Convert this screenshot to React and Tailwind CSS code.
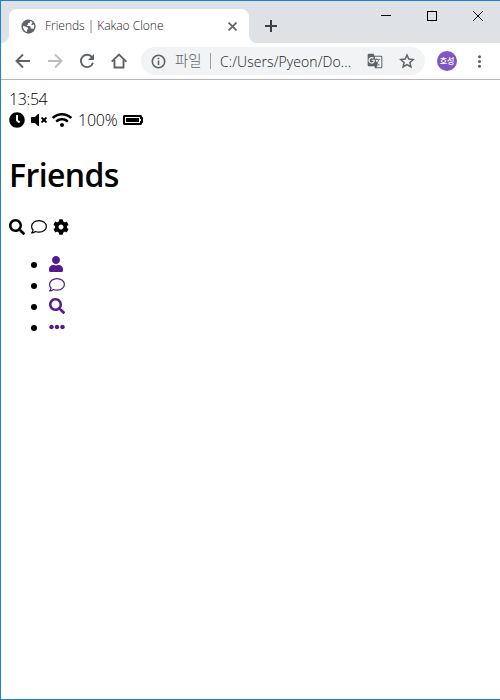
import React from "react";
import {
  FaClock,
  FaVolumeMute,
  FaWifi,
  FaBatteryFull,
  FaSearch,
  FaCog,
  FaUser,
  FaEllipsisH,
} from "react-icons/fa";
import { MdGTranslate, MdMoreVert } from "react-icons/md";

function Line({ children, className, width = 1.9 }) {
  return (
    <svg viewBox="0 0 16 16" className={className} fill="none" stroke="currentColor" strokeWidth={width}>
      {children}
    </svg>
  );
}

function Globe() {
  return (
    <svg viewBox="0 0 16 16" className="size-[15px] shrink-0">
      <circle cx="8" cy="8" r="7.6" fill="#5f6368" />
      <path
        d="M9.6 2.1C10 3.300 9.500 4 8.500 4.200L7.400 4.600V6L6.300 6.400V7.500H9.400L10.400 8.500V10H12.300L13.300 11C14.200 9.600 14.400 7.400 13.700 5.700L12 6.600L10.800 5.800L12.400 3.600C11.600 2.800 10.700 2.300 9.600 2.100z"
        fill="#ffffff"
      />
      <path
        d="M2.100 7.200L5.300 8.200L7.500 9.200V10.600L6.400 11.700V13.800C3.900 13.200 1.900 10.700 2.100 7.200z"
        fill="#ffffff"
      />
    </svg>
  );
}

function Comment() {
  return (
    <svg viewBox="0 0 16 16" className="size-4" fill="none" stroke="currentColor" strokeWidth="1.2" strokeLinejoin="round">
      <path d="M8 1.600c4.100 0 7.400 2.600 7.400 5.800S12.100 13.200 8 13.200c-1.300 0-2.500-.2-3.600-.7-1 .8-2.300 1.500-3.800 1.500.8-.8 1.400-1.900 1.500-3C1.100 10 .6 8.800.6 7.400.6 4.200 3.900 1.600 8 1.600z" />
    </svg>
  );
}

function TitleBar() {
  return (
    <div className="flex h-[42px] bg-[#dee1e6] pt-2">
      <div className="flex w-2 items-end bg-white">
        <div className="h-full w-full rounded-br-lg bg-[#dee1e6]" />
      </div>
      <div className="flex h-[34px] w-[240px] items-center rounded-t-lg bg-white pl-[12px] pr-[12px]">
        <Globe />
        <span className="ml-[9px] flex-1 whitespace-nowrap text-[12px] tracking-[-0.030px] text-[#202124]">
          Friends | Kakao Clone
        </span>
        <Line className="size-[9px]" width={2.900}>
          <path d="M1 1L15 15M15 1L1 15" stroke="#5f6368" />
        </Line>
      </div>
      <div className="flex w-2 items-end bg-white">
        <div className="h-full w-full rounded-bl-lg bg-[#dee1e6]" />
      </div>
      <Line className="ml-[8px] mt-[11px] size-[12px] text-[#3c4043]" width={2.67}>
        <path d="M8 0V16M0 8H16" />
      </Line>
      <div className="-mt-2 ml-auto flex h-[29px] items-center text-black">
        <div className="flex w-[46px] justify-center">
          <div className="h-px w-[10px] bg-black" />
        </div>
        <div className="flex w-[46px] justify-center">
          <div className="size-[10px] border border-black" />
        </div>
        <div className="flex w-[45px] justify-center">
          <svg viewBox="0 0 10 10" className="size-[10px]" fill="none" stroke="currentColor">
            <path d="M0 0L10 10M10 0L0 10" />
          </svg>
        </div>
      </div>
    </div>
  );
}

function Toolbar() {
  return (
    <div className="flex h-[37px] items-center border-b border-[#b6b4b6] bg-white text-[#5f6368]">
      <Line className="ml-[14px] size-4">
        <path d="M15 8H2M8 1.500L1.500 8L8 14.500" />
      </Line>
      <Line className="ml-[16px] size-4 text-[#babcbe]">
        <path d="M1 8H14M8 1.500L14.500 8L8 14.500" />
      </Line>
      <Line className="ml-[16px] size-4">
        <path d="M13.300 4.500A6.200 6.200 0 1 0 14 9.800" />
        <path d="M15 1V7H9z" fill="currentColor" stroke="none" />
      </Line>
      <Line className="ml-[16px] size-4">
        <path d="M.7 8.600L8 1.600L15.300 8.600M3.500 7V14.500H12.500V7" />
      </Line>
      <div className="ml-[14px] flex h-7 w-[284px] items-center rounded-full bg-[#f1f3f4] pl-[10px] pr-[10px]">
        <Line className="size-[15px] shrink-0" width={1.7}>
          <circle cx="8" cy="8" r="6.600" />
          <path d="M8 7V11.800M8 4V5.700" />
        </Line>
        <span className="ml-[9px] w-[27px] whitespace-nowrap text-[14.500px]">파일</span>
        <div className="ml-[8px] h-4 w-px bg-[#9aa0a6]" />
        <span className="ml-[9px] flex-1 whitespace-nowrap text-[14px] tracking-[0.080px] text-[#202124]">
          C:/Users/Pyeon/Do...
        </span>
        <MdGTranslate className="size-4" />
        <Line className="ml-[16px] size-4" width={1.500}>
          <path d="M8 2L9.800 6.100L14.300 6.500L10.900 9.500L11.900 13.900L8 11.600L4.100 13.900L5.100 9.500L1.700 6.500L6.200 6.100z" />
        </Line>
      </div>
      <div className="ml-[12px] flex size-5 items-center justify-center whitespace-nowrap rounded-full bg-[#7e57c2] text-[8px] font-medium text-white">
        호성
      </div>
      <MdMoreVert className="ml-[13px] size-[19px]" />
    </div>
  );
}

function NavItem({ children }) {
  return (
    <li className="flex h-[21px] items-center">
      <span className="mr-[12px] mt-px size-[6px] rounded-full bg-black" />
      <a className="-mt-px text-[#551a8b]">{children}</a>
    </li>
  );
}

export default function App() {
  return (
    <div className="flex h-[700px] w-[500px] flex-col overflow-hidden border-y border-l border-[#1883d7] bg-white font-['Open_Sans','Noto_Sans_CJK_KR',sans-serif] font-light text-black">
      <TitleBar />
      <Toolbar />
      <main className="flex flex-col p-2">
        <div className="mt-px h-[21px] text-[16px] leading-[21px] tracking-[-0.400px]">13:54</div>
        <div className="flex h-[21px] items-center text-[16px] leading-[21px]">
          <FaClock className="-mt-px size-4" />
          <FaVolumeMute className="-mt-px ml-[6px] size-4" />
          <FaWifi className="-mt-px ml-[5px] h-4 w-5" />
          <span className="ml-[6px] w-[45px] tracking-[-0.200px]">100%</span>
          <FaBatteryFull className="-mt-px h-4 w-5" />
        </div>
        <h1 className="mt-[22px] h-[43px] text-[32px] font-semibold leading-[43px] tracking-[-0.600px]">Friends</h1>
        <div className="mt-[20px] flex h-[21px] items-center gap-[6px]">
          <FaSearch className="size-4" />
          <Comment />
          <FaCog className="size-4" />
        </div>
        <ul className="mt-[17px] pl-[22px]">
          <NavItem>
            <FaUser className="h-4 w-[14px]" />
          </NavItem>
          <NavItem>
            <Comment />
          </NavItem>
          <NavItem>
            <FaSearch className="size-4" />
          </NavItem>
          <NavItem>
            <FaEllipsisH className="size-4" />
          </NavItem>
        </ul>
      </main>
    </div>
  );
}
